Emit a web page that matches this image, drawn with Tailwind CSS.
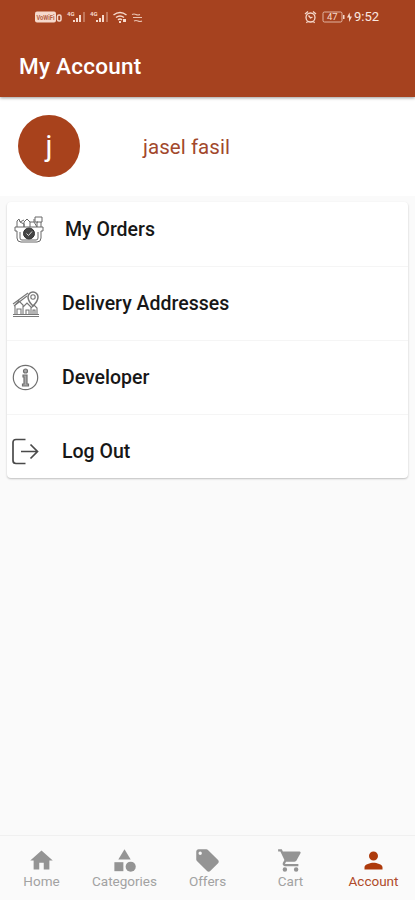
<!DOCTYPE html>
<html lang="en">
<head>
<meta charset="utf-8">
<title>My Account</title>
<script src="https://cdn.jsdelivr.net/npm/@tailwindcss/browser@4"></script>
</head>
<body class="bg-[#fafafa] font-['Roboto','Liberation_Sans',sans-serif]">
<div class="w-[415px] h-[900px] flex flex-col overflow-hidden">
  <header class="relative z-10 h-[97px] shrink-0 bg-[#a6421f] shadow-[0_1px_3px_rgba(0,0,0,0.4)] text-white flex flex-col">
    <div class="h-[34px] flex items-center justify-between pl-[35px] pr-[34px] text-[#f6d9cc]">
      <svg width="110" height="14" viewBox="0 0 110 14" fill="currentColor" font-family="Roboto, sans-serif">
        <rect x="0" y="1.5" width="21" height="11" rx="2"/>
        <text x="1.5" y="9.8" font-size="7" font-weight="700" fill="#b5603f" textLength="18" lengthAdjust="spacingAndGlyphs">VoWiFi</text>
        <rect x="22.500" y="5" width="3.500" height="6" rx="1.500" fill="none" stroke="currentColor" stroke-width="1.500"/>
        <text x="32" y="6" font-size="6" font-weight="700">4G</text>
        <path d="M38 12v-2h2v2zM41 12V8h2v4zM44 12V5h2v7z"/><path d="M48 12V2h2v10z" opacity=".35"/>
        <text x="55" y="6" font-size="6" font-weight="700">4G</text>
        <path d="M61 12v-2h2v2zM64 12V8h2v4zM67 12V5h2v7z"/><path d="M71 12V2h2v10z" opacity=".35"/>
        <g fill="none" stroke="currentColor" stroke-width="1.500"><path d="M78.500 5q6.500-5 13 0M81 7.500q4-3 8 0M83 9.800q2-1.500 4 0"/></g>
        <path d="M84 11h2v2h-2zM88 9h3v3h-3z"/>
        <g fill="none" stroke="currentColor" stroke-width="1.100" opacity=".85"><path d="M97 4.500q2-1 4 0t4 0M98 7.500h9M99 11q2-1 4 0t4 0"/></g>
      </svg>
      <div class="flex items-center">
        <svg width="13" height="14" viewBox="0 0 13 14" fill="none" stroke="currentColor" stroke-width="1.300"><circle cx="6.500" cy="7.500" r="4.500"/><path d="M1 4l3-2.500M12 4L9 1.500M4.500 5.500l2 2.500 2-1M3.500 11.500l-1 1.500M9.500 11.500l1 1.500"/></svg>
        <svg class="ml-[5px]" width="31" height="14" viewBox="0 0 31 14" font-family="Roboto, sans-serif" fill="currentColor"><rect x="1" y="2" width="19" height="10" rx="1.500" fill="none" stroke="currentColor" opacity=".75"/><text x="5" y="10.300" font-size="9.500">47</text><rect x="21" y="5" width="1.500" height="4"/><path d="M27.500 2.500L25 7.500h2V12l3-5.500h-2z"/></svg>
        <span class="ml-px w-[27px] text-[13px] leading-[14px] text-[#fbe9e1]">9:52</span>
      </div>
    </div>
    <h1 class="pl-[19px] pt-[18px] text-[22.5px] leading-[28px] font-medium tracking-[0.25px]">My Account</h1>
  </header>
  <section class="h-[99px] shrink-0 bg-white flex items-center pl-[18px] pb-px">
    <div class="size-[62px] rounded-full bg-[#a8421c] text-white text-[29px] leading-none flex items-center justify-center">j</div>
    <p class="ml-[63px] pt-[3px] text-[20.5px] text-[#a2482c] tracking-[0.05px]">jasel fasil</p>
  </section>
  <main class="flex-1 pt-[6px] px-[8px]">
    <ul class="w-[401px] h-[276px] -ml-px bg-white rounded-[4px] shadow-[0_1px_2px_rgba(0,0,0,0.24)] text-[19.5px] font-medium text-[#171717]">
      <li class="h-[65px] pb-[9px] flex items-center border-b border-[#f5f5f5] pl-[7px]">
        <svg width="30" height="30" viewBox="0 0 30 30" fill="none" stroke="#686868" stroke-width="1"><path d="M1 12h28v4h-2v7q0 4-4 4H7q-4 0-4-4v-7H1zM3 12V6l2-2 1 3 4 2v3M10 12V7l3-3 3 3v5M16 7h4l3 5M20 7V4M23 12V7h5V2h-7v5h3M6 7l4-2M27 7v5M6 17v6q0 2 2 2h14q2 0 2-2v-6"/><circle cx="15" cy="18.500" r="5.500" fill="#454545" stroke="#333"/><path d="M12.500 18.500l2 2 3.500-4" stroke="#ddd"/></svg>
        <span class="ml-[21px]">My Orders</span>
      </li>
      <li class="h-[74px] flex items-center border-b border-[#f5f5f5] pl-[5px]">
        <svg width="28" height="28" viewBox="0 0 28 28" fill="none" stroke="#777" stroke-width="1.100"><path d="M1 26.500h26M1 24.500h26M3 24V15l4-4 4 4v9M11 24v-7l4-4 4 4v7M19 24v-6l3-3 3 3v6M1 14L16 3M2 16L15 6M5 24v-5h4v5M14 24v-4h3v4M21 24v-4h2v4"/><path d="M21 16c-3-3-5-6-5-9a5 5 0 0110 0c0 3-2 6-5 9z" stroke-width="1.500"/><circle cx="21" cy="7" r="2.200"/></svg>
        <span class="ml-[22px]">Delivery Addresses</span>
      </li>
      <li class="h-[74px] flex items-center border-b border-[#f5f5f5] pl-[5px]">
        <svg width="27" height="27" viewBox="0 0 27 27" fill="none" stroke="#6f6f6f" stroke-width="1.200"><circle cx="13.500" cy="13.500" r="12.200"/><circle cx="13.500" cy="7" r="2" fill="#aaa"/><path d="M11 11h4v9h1.500v2h-6v-2H12v-7h-1z" fill="#aaa"/></svg>
        <span class="ml-[23px]">Developer</span>
      </li>
      <li class="h-[73px] flex items-center pl-[5px]">
        <svg class="mb-px" width="27" height="27" viewBox="0 0 27 27" fill="none" stroke="#4a4a4a" stroke-width="1.700"><path d="M13.500 1.500H4Q1 1.500 1 4.500v18q0 3 3 3h9.500M9 13.500h16.500M18.500 6.500l7 7-7 7"/></svg>
        <span class="ml-[23px]">Log Out</span>
      </li>
    </ul>
  </main>
  <nav class="h-[65px] shrink-0 border-t border-[#f0f0f0] grid grid-cols-5 pt-[11px] text-[13.5px] leading-[14px] text-[#a2a2a2]">
    <div class="flex flex-col items-center"><svg width="27" height="27" viewBox="0 0 24 24" fill="#949494"><path d="M10 20v-6h4v6h5v-8h3L12 3 2 12h3v8z"/></svg>Home</div>
    <div class="flex flex-col items-center"><svg width="27" height="27" viewBox="0 0 24 24" fill="#949494"><path d="M12 2L6.500 11h11z"/><circle cx="17.500" cy="17.500" r="4.500"/><path d="M3 13.500h8v8H3z"/></svg>Categories</div>
    <div class="flex flex-col items-center"><svg width="27" height="27" viewBox="0 0 24 24" fill="#949494"><path d="M21.400 11.600l-9-9C12.050 2.220 11.550 2 11 2H4c-1.100 0-2 .9-2 2v7c0 .550.220 1.050.590 1.420l9 9c.360.360.860.580 1.410.580s1.050-.220 1.410-.590l7-7c.370-.360.590-.860.590-1.410s-.230-1.060-.590-1.400zM5.500 7a1.500 1.500 0 110-3 1.500 1.500 0 010 3z"/></svg>Offers</div>
    <div class="flex flex-col items-center"><svg width="27" height="27" viewBox="0 0 24 24" fill="#949494"><path d="M7 18a2 2 0 100 4 2 2 0 000-4zM1 2v2h2l3.600 7.590-1.350 2.450C4.520 15.370 5.480 17 7 17h12v-2H7.420c-.14 0-.25-.11-.25-.25L8.100 13h7.450c.75 0 1.410-.41 1.750-1.030l3.580-6.490A1 1 0 0020 4H5.210l-.94-2zM17 18a2 2 0 100 4 2 2 0 000-4z"/></svg>Cart</div>
    <div class="flex flex-col items-center text-[#b04a29]"><svg width="27" height="27" viewBox="0 0 24 24" fill="#ad3a0c"><path d="M12 12a4 4 0 100-8 4 4 0 000 8zm0 2c-2.670 0-8 1.340-8 4v2h16v-2c0-2.660-5.330-4-8-4z"/></svg>Account</div>
  </nav>
</div>
</body>
</html>
